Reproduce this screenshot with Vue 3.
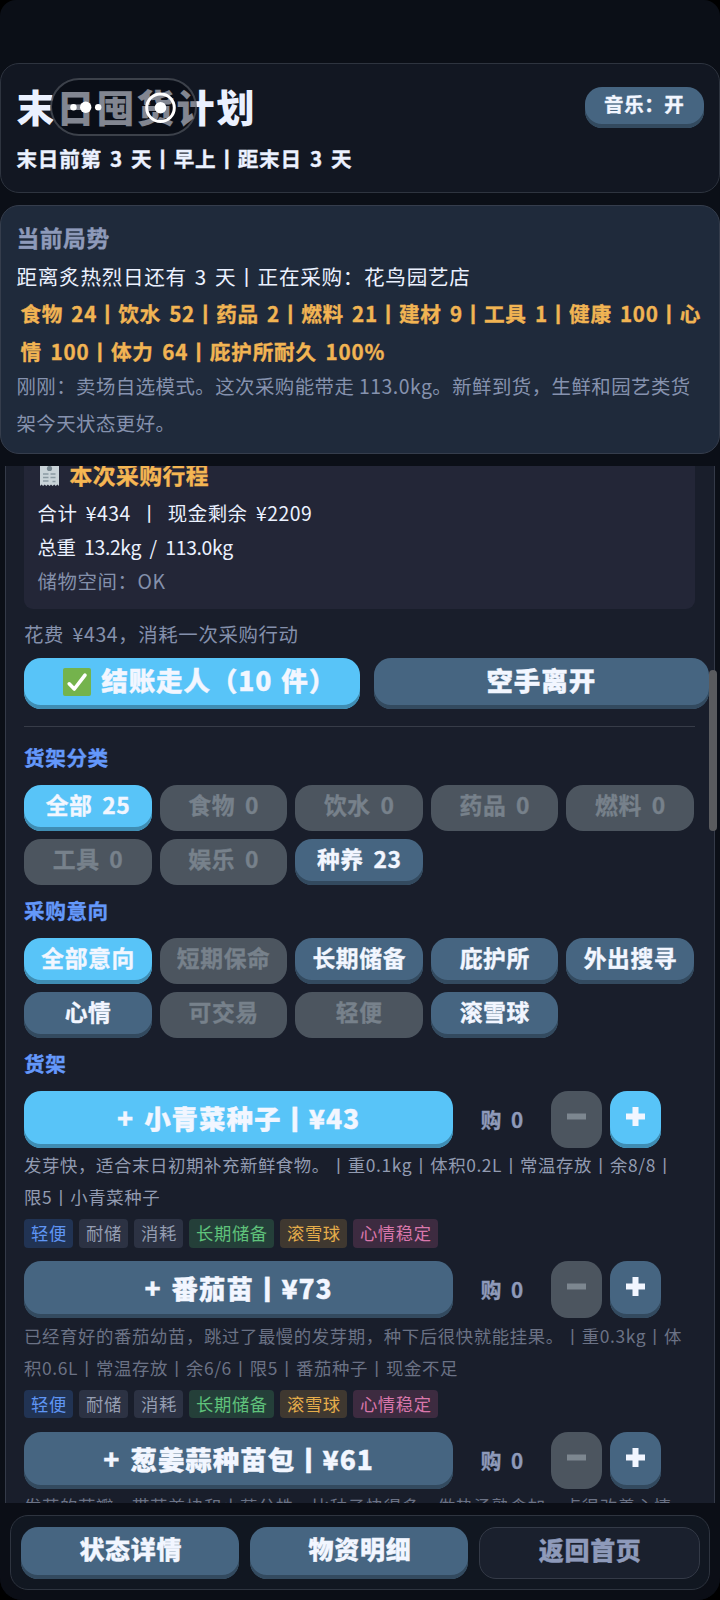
<script setup>
const categories = [
  { label: '全部 25', state: 'active' },
  { label: '食物 0', state: 'off' },
  { label: '饮水 0', state: 'off' },
  { label: '药品 0', state: 'off' },
  { label: '燃料 0', state: 'off' },
  { label: '工具 0', state: 'off' },
  { label: '娱乐 0', state: 'off' },
  { label: '种养 23', state: 'on' },
]
const intents = [
  { label: '全部意向', state: 'active' },
  { label: '短期保命', state: 'off' },
  { label: '长期储备', state: 'on' },
  { label: '庇护所', state: 'on' },
  { label: '外出搜寻', state: 'on' },
  { label: '心情', state: 'on' },
  { label: '可交易', state: 'off' },
  { label: '轻便', state: 'off' },
  { label: '滚雪球', state: 'on' },
]
const tags = [
  { label: '轻便', tone: 'blue' },
  { label: '耐储', tone: 'gray' },
  { label: '消耗', tone: 'gray' },
  { label: '长期储备', tone: 'green' },
  { label: '滚雪球', tone: 'gold' },
  { label: '心情稳定', tone: 'pink' },
]
const items = [
  {
    name: '+ 小青菜种子丨¥43',
    state: 'active',
    lines: ['发芽快，适合末日初期补充新鲜食物。丨重0.1kg丨体积0.2L丨常温存放丨余8/8丨', '限5丨小青菜种子'],
  },
  {
    name: '+ 番茄苗丨¥73',
    state: 'on',
    lines: ['已经育好的番茄幼苗，跳过了最慢的发芽期，种下后很快就能挂果。丨重0.3kg丨体', '积0.6L丨常温存放丨余6/6丨限5丨番茄种子丨现金不足'],
  },
  {
    name: '+ 葱姜蒜种苗包丨¥61',
    state: 'on',
    last: true,
    lines: ['发芽的蒜瓣、带芽姜块和小葱分株，比种子快得多，做热汤熟食加一点很改善心情'],
  },
]
</script>

<template>
  <div class="screen">
    <header class="head">
      <div class="head-text">
        <h1>末日囤货计划</h1>
        <p>末日前第 3 天丨早上丨距末日 3 天</p>
      </div>
      <button class="btn on music">音乐：开</button>
      <div class="capsule">
        <svg width="146" height="58" viewBox="0 0 146 58">
          <circle cx="23.500" cy="29.300" r="3.200" fill="#fff" />
          <circle cx="35.700" cy="29.300" r="5.700" fill="#fff" />
          <circle cx="48.200" cy="29.300" r="3.200" fill="#fff" />
          <circle cx="110.500" cy="29.700" r="13.800" fill="none" stroke="#fff" stroke-width="3" />
          <circle cx="110.500" cy="29.700" r="5.800" fill="#fff" />
        </svg>
      </div>
    </header>

    <section class="status">
      <h2>当前局势</h2>
      <p class="where">距离炙热烈日还有 3 天丨正在采购：花鸟园艺店</p>
      <p class="stats">食物 24丨饮水 52丨药品 2丨燃料 21丨建材 9丨工具 1丨健康 100丨心</p>
      <p class="stats rest">情 100丨体力 64丨庇护所耐久 100%</p>
      <p class="news">刚刚：卖场自选模式。这次采购能带走 113.0kg。新鲜到货，生鲜和园艺类货</p>
      <p class="news">架今天状态更好。</p>
    </section>

    <main class="view">
      <div class="panel">
        <section class="trip">
          <h3>
            <svg width="19" height="26" viewBox="0 0 19 26">
              <path d="M0 0h19v25l-1.600-1.600-1.600 1.600-1.600-1.600-1.600 1.600-1.600-1.600L9.500 25l-1.600-1.600L6.300 25l-1.600-1.600L3.100 25l-1.600-1.600L0 25z" fill="#c9d3d8" />
              <circle cx="9.500" cy="7.500" r="2.600" fill="#76868f" />
              <path d="M3 13h5.500M10.500 13h5M3 16.500h5.500M10.500 16.500h5M3 20h5.500M12.500 20.500h3" stroke="#8b9aa2" stroke-width="1.300" />
            </svg>
            <span>本次采购行程</span>
          </h3>
          <p class="total">合计 ¥434 丨 现金剩余 ¥2209</p>
          <p class="weight">总重 13.2kg / 113.0kg</p>
          <p class="muted">储物空间：OK</p>
        </section>
        <p class="cost">花费 ¥434，消耗一次采购行动</p>
        <div class="actions">
          <button class="btn active big pay">
            <svg width="28" height="28" viewBox="0 0 28 28">
              <rect width="28" height="28" rx="2" fill="#74b34c" />
              <path d="M6.200 15.800L11.300 21 22 7.200" fill="none" stroke="#fff" stroke-width="3.600" stroke-linecap="round" stroke-linejoin="round" />
            </svg>
            <span>结账走人（10 件）</span>
          </button>
          <button class="btn on big">空手离开</button>
        </div>
        <hr />
        <h4>货架分类</h4>
        <div class="chips">
          <button v-for="c in categories" :key="c.label" class="btn chip" :class="c.state">{{ c.label }}</button>
        </div>
        <h4>采购意向</h4>
        <div class="chips">
          <button v-for="c in intents" :key="c.label" class="btn chip" :class="c.state">{{ c.label }}</button>
        </div>
        <h4>货架</h4>
        <article v-for="item in items" :key="item.name" class="item" :class="item.state">
          <div class="item-row">
            <button class="btn name" :class="item.state">{{ item.name }}</button>
            <span class="count">购 0</span>
            <button class="btn step off">
              <svg width="19" height="19" viewBox="0 0 19 19"><path d="M0 9.500h19" stroke="#7d8790" stroke-width="6" /></svg>
            </button>
            <button class="btn step" :class="item.state">
              <svg width="19" height="19" viewBox="0 0 19 19"><path d="M0 9.500h19M9.500 0v19" stroke="#f2f6ff" stroke-width="6" /></svg>
            </button>
          </div>
          <div class="desc"><p v-for="l in item.lines" :key="l">{{ l }}</p></div>
          <div v-if="!item.last" class="tags">
            <span v-for="t in tags" :key="t.label" class="tag" :class="t.tone">{{ t.label }}</span>
          </div>
        </article>
      </div>
      <div class="thumb"></div>
    </main>

    <footer class="foot">
      <nav>
        <button class="btn on">状态详情</button>
        <button class="btn on">物资明细</button>
        <button class="btn ghost">返回首页</button>
      </nav>
    </footer>
  </div>
</template>

<style>
html,
body {
  background: #000;
}
</style>

<style scoped>
* {
  box-sizing: border-box;
  margin: 0;
  padding: 0;
}
.screen {
  width: 720px;
  height: 1600px;
  padding-top: 63px;
  display: flex;
  flex-direction: column;
  overflow: hidden;
  border-radius: 16px 16px 22px 22px;
  background: #0b0f17;
  color: #ebf1ff;
  font-family: 'Noto Sans CJK SC', sans-serif;
  white-space: nowrap;
}
.head {
  position: relative;
  height: 130px;
  flex: none;
  border: 1.500px solid #2e343f;
  border-radius: 19px;
  background: #121722;
  padding: 15px 15px 0 15.500px;
  display: flex;
  justify-content: space-between;
  align-items: flex-start;
}
h1 {
  font-size: 38px;
  line-height: 54px;
  font-weight: 900;
  letter-spacing: 2px;
}
.head p {
  font-size: 20.600px;
  line-height: 30px;
  margin-top: 10px;
  font-weight: 700;
  letter-spacing: 0.750px;
  word-spacing: 2.700px;
}
.head p,
.stats,
h2,
h3,
h4,
.count,
.btn {
  -webkit-text-stroke: 0.350px currentColor;
}
.btn {
  border: 0;
  font: inherit;
  font-weight: 700;
  color: #f2f6ff;
  display: flex;
  align-items: center;
  justify-content: center;
  border-radius: 17px;
  padding-bottom: 4px;
}
.btn.on {
  background: #466581;
  box-shadow: inset 0 -4px #334a5f;
}
.btn.active {
  background: #58c4f8;
  box-shadow: inset 0 -4px #3f8db3;
}
.btn.off {
  background: #4c555f;
  color: #77818b;
}
.music {
  width: 119.500px;
  height: 41px;
  margin-top: 8px;
  font-size: 19.500px;
  letter-spacing: 0.600px;
  padding-bottom: 8px;
}
.capsule {
  position: absolute;
  left: 48.500px;
  top: 14px;
  width: 147px;
  height: 58px;
  border-radius: 29px;
  background: rgba(3, 5, 10, 0.450);
  box-shadow: inset 0 0 0 2px rgba(110, 115, 125, 0.500);
}
.status {
  height: 249px;
  flex: none;
  margin-top: 12px;
  border: 1.500px solid #353d4c;
  border-radius: 19px;
  background: #1f2a3b;
  padding: 12.500px 0 0 15.500px;
}
h2 {
  font-size: 22.800px;
  line-height: 38px;
  letter-spacing: 0.500px;
  color: #8e9aba;
}
.where {
  font-size: 20.600px;
  line-height: 38px;
  letter-spacing: 0.700px;
  word-spacing: 2.700px;
}
.stats {
  font-size: 20.600px;
  line-height: 38px;
  font-weight: 700;
  color: #f1b453;
  padding-left: 4px;
  letter-spacing: 0.700px;
  word-spacing: 2.900px;
}
.stats.rest {
  letter-spacing: 0.850px;
  word-spacing: 3px;
}
.where + .stats {
  margin-top: -0.500px;
}
.news {
  font-size: 19.400px;
  line-height: 36.500px;
  letter-spacing: 0.480px;
  color: #8692ae;
}
.rest + .news {
  margin-top: -2px;
}
.view {
  position: relative;
  flex: 1;
  margin-top: 12px;
  overflow: hidden;
  display: flex;
  flex-direction: column;
}
.panel {
  width: 710px;
  margin-left: 5px;
  height: 1100px;
  flex: none;
  border-left: 1.500px solid #343a48;
  border-right: 1.500px solid #343a48;
  background: #191e2b;
  padding-left: 18px;
}
.trip {
  width: 670.500px;
  height: 143px;
  border-radius: 0 0 9px 9px;
  background: #232637;
  padding-left: 13.500px;
}
h3 {
  height: 30px;
  line-height: 18.500px;
  font-size: 22.800px;
  letter-spacing: 0.450px;
  color: #f5b653;
  display: flex;
}
h3 svg {
  margin: -5px 11px 0 2px;
}
.trip p {
  font-size: 19.400px;
  line-height: 34.200px;
  letter-spacing: 0.500px;
  word-spacing: 4px;
}
.trip .total {
  word-spacing: 3.700px;
}
.trip .weight {
  letter-spacing: -0.350px;
  word-spacing: 4.500px;
}
.trip .muted,
.cost {
  color: #8490ab;
}
.trip .muted {
  letter-spacing: 0.600px;
}
.cost {
  font-size: 19.400px;
  line-height: 30px;
  margin-top: 10px;
  letter-spacing: 0.650px;
  word-spacing: 3.500px;
}
.actions {
  display: flex;
  gap: 14px;
  margin-top: 9px;
}
.big {
  width: 335.500px;
  height: 51px;
  flex: none;
  font-size: 26.500px;
  font-weight: 900;
  letter-spacing: 0.900px;
}
.btn.big {
  padding-bottom: 8px;
}
.pay {
  padding-left: 16px;
  word-spacing: 2px;
}
.big svg {
  margin: 4px 10px 0 0;
}
hr {
  border: 0;
  height: 1px;
  width: 670.500px;
  background: #373c48;
  margin-top: 17px;
}
h4 {
  font-size: 20.600px;
  line-height: 30px;
  letter-spacing: 0.600px;
  color: #6498fa;
}
hr + h4 {
  margin-top: 15px;
}
.chips + h4 {
  margin-top: 10px;
}
.chips {
  display: grid;
  grid-template-columns: repeat(5, 127.600px);
  gap: 8px;
  margin-top: 13px;
}
.chip {
  height: 46px;
  font-size: 22.800px;
  letter-spacing: 0.600px;
  word-spacing: 4px;
}
.btn.chip {
  padding: 0 0 6.500px 0.500px;
}
.item {
  height: 170.600px;
}
h4 + .item {
  margin-top: 12.500px;
}
.item-row {
  display: flex;
}
.name {
  width: 429.200px;
  height: 57px;
  font-size: 26.500px;
  font-weight: 900;
  letter-spacing: 0.950px;
  word-spacing: 3px;
  padding-bottom: 4px;
}
.count {
  width: 97.500px;
  line-height: 56px;
  text-align: center;
  font-size: 20.600px;
  font-weight: 700;
  color: #8e9aba;
  word-spacing: 5px;
}
.step {
  width: 51.300px;
  height: 57px;
  padding-bottom: 6px;
}
.step + .step {
  margin-left: 8px;
}
.desc {
  margin: 1.500px 0 0;
  font-size: 17.400px;
  line-height: 32.300px;
  letter-spacing: 0.600px;
  color: #6b7285;
}
.item.active .desc {
  color: #929bb1;
}
.tags {
  display: flex;
  gap: 5.700px;
  margin-top: 5.500px;
}
.tag {
  height: 28.700px;
  line-height: 28px;
  padding: 0 6.500px 0 7px;
  border-radius: 4px;
  font-size: 17.300px;
  letter-spacing: 0.640px;
}
.blue {
  background: #213353;
  color: #5f95f4;
}
.gray {
  background: #2c3243;
  color: #959eb2;
}
.green {
  background: #243f39;
  color: #5fc27b;
}
.gold {
  background: #3f3830;
  color: #e5ad4b;
}
.pink {
  background: #3d2b40;
  color: #d977ab;
}
.thumb {
  position: absolute;
  left: 709px;
  top: 204px;
  width: 8px;
  height: 161px;
  border-radius: 4px;
  background: #5a5b5e;
}
.foot {
  flex: none;
  height: 97px;
  padding: 12px 10px 0;
  background: #0b0e16;
}
nav {
  height: 75px;
  border: 1.500px solid #2e343f;
  border-radius: 18px;
  background: #111721;
  padding: 11px 9.500px 11px 10px;
  display: flex;
  gap: 11px;
}
nav .btn {
  flex: 1;
  height: 52px;
  font-size: 25px;
  letter-spacing: 0.700px;
  font-weight: 900;
  padding: 0 0 10px 1.500px;
}
nav .ghost {
  background: #1a202d;
  border: 1.500px solid #343a47;
  color: #8e9aba;
  padding-bottom: 9px;
}
</style>
